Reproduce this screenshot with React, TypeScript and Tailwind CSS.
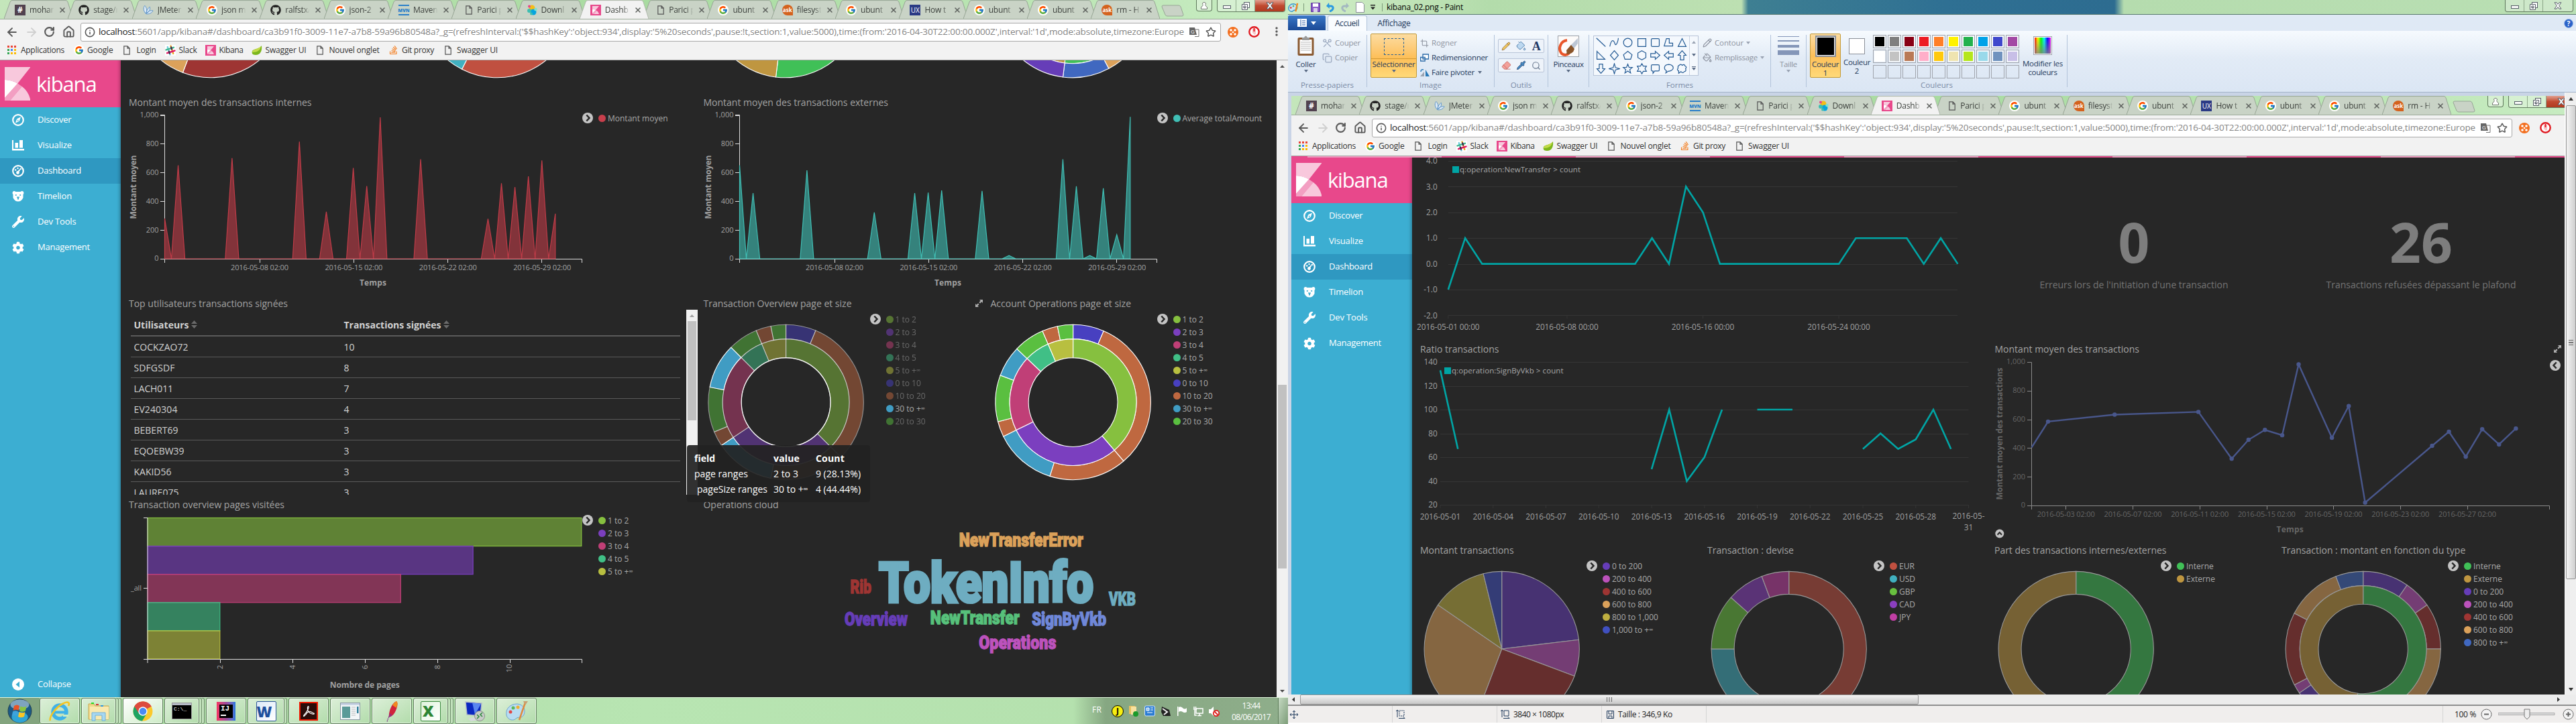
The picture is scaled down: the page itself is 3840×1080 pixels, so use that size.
import React, { useLayoutEffect, useRef, useState } from "react";
import { FcGoogle } from "react-icons/fc";
import { FaGithub, FaWrench, FaCog, FaStackOverflow } from "react-icons/fa";
import { ArrowLeft, ArrowRight, RotateCw, House, Info, Star, X, Scissors, Copy, Crop, Search, Pencil, PaintBucket, Pipette, Eraser } from "lucide-react";

/* Single-line text whose tracking is tuned so that it spans a given width. */
function Fit({ w, className = "", children }: { w: number; className?: string; children: string }) {
  const ref = useRef<HTMLSpanElement>(null);
  const [ls, setLs] = useState(0);
  useLayoutEffect(() => {
    if (ref.current) setLs((w - ref.current.getBoundingClientRect().width) / children.length);
  }, []);
  return (
    <span ref={ref} className={"inline-block whitespace-pre " + className} style={{ letterSpacing: ls + "px" }}>
      {children}
    </span>
  );
}

/* ------------------------------------------------------------------ icons */

const SlackIcon = ({ s = 16 }: { s?: number }) => (
  <svg width={s} height={s} viewBox="0 0 16 16">
    <rect width="16" height="16" fill="#fff" />
    <g strokeWidth="2.4" strokeLinecap="round" transform="rotate(-18 8 8)">
      <path d="M5.5 2v12" stroke="#6ecadc" />
      <path d="M10.5 2v12" stroke="#e9a820" />
      <path d="M2 5.5h12" stroke="#3eb991" />
      <path d="M2 10.5h12" stroke="#e01563" />
      <path d="M5.5 9v3M10.5 4v3" stroke="#472a49" />
    </g>
  </svg>
);

const KibanaMark = ({ w, h }: { w: number; h: number }) => (
  <svg width={w} height={h} viewBox="0 0 38 50" preserveAspectRatio="none">
    <path d="M0 0H38L19 24.500A38 38 0 0 0 0 19Z" fill="#fff" fillOpacity=".7" />
    <path d="M0 19A38 38 0 0 1 19 24.500L0 46Z" fill="#fff" />
    <path d="M19 24.500L0 46V50H8L25.500 29Z" fill="#fff" fillOpacity=".48" />
    <path d="M25.500 29A34 34 0 0 1 38 50H8Z" fill="#fff" fillOpacity=".7" />
  </svg>
);

const KibanaIcon = () => (
  <div className="flex h-4 w-4 items-center justify-center bg-[#e8488b]">
    <KibanaMark w={10} h={12} />
  </div>
);

const PageIcon = ({ className = "" }: { className?: string }) => (
  <svg width="10" height="14" viewBox="0 0 10 14" className={className} fill="none" stroke="#555" strokeWidth="1.2">
    <path d="M.8.8h5.200l3.200 3.200v9.200h-8.400zM6 .8v3.400h3.200" />
  </svg>
);

const AppsIcon = () => (
  <svg width="13" height="13" viewBox="0 0 13 13">
    {["#ea4335", "#ea4335", "#ea4335", "#34a853", "#4285f4", "#fbbc05", "#34a853", "#fbbc05", "#fbbc05"].map((c, i) => (
      <rect key={i} x={(i % 3) * 5} y={Math.floor(i / 3) * 5} width="3" height="3" fill={c} />
    ))}
  </svg>
);

const LeafIcon = () => (
  <svg width="16" height="16" viewBox="0 0 16 16">
    <path d="M15 1C16 9 13 15 6 15 1 15 0 12 1 9 4 5 11 7 15 1Z" fill="#7db71c" />
    <path d="M14 2C13 8 9 11 1 11 1 6 9 7 14 2Z" fill="#c3db4a" />
  </svg>
);

const SlackTab = () => (
  <div className="flex h-4 w-4 items-center justify-center bg-[#51414f] text-[12px] font-bold text-white">#</div>
);
const GoogleIcon = () => (
  <div className="flex h-4 w-4 items-center justify-center rounded-full bg-white">
    <FcGoogle size={14} />
  </div>
);
const JMeterIcon = () => (
  <svg width="17" height="16" viewBox="0 0 17 16" fill="#dbe9f5" stroke="#5a91c8" strokeWidth="1">
    <path d="M4 13C0 8 1 3 3 1 6 4 7 9 5 13ZM5 13C6 8 8 5 11 3 12 7 10 11 6 13ZM5 14C8 10 12 8 16 9 14 13 9 15 5 14Z" />
  </svg>
);
const MavenIcon = () => (
  <div className="flex h-4 w-4 items-center justify-center border-y-2 border-[#2a7fc9] text-[7px] font-black leading-none text-[#2a7fc9]">MVN</div>
);
const ElasticIcon = () => (
  <svg width="16" height="16" viewBox="0 0 16 16">
    <circle cx="8" cy="5" r="4.500" fill="#f4bd19" />
    <circle cx="10" cy="11" r="4.500" fill="#07a5de" />
    <circle cx="4" cy="9" r="3" fill="#3cbeb1" />
    <circle cx="4" cy="2.500" r="2" fill="#e8478b" />
    <circle cx="13.500" cy="7" r="2.300" fill="#7de2d1" />
    <circle cx="7" cy="13.500" r="2" fill="#3ebeb0" />
  </svg>
);
const AskIcon = () => (
  <div className="flex h-4 w-4 items-center justify-center rounded-full rounded-br-none bg-[#d4621e] text-[8px] font-bold leading-none text-white">ask</div>
);
const UxIcon = () => (
  <div className="flex h-4 w-4 items-center justify-center bg-[#2b3a85] text-[10px] leading-none text-white">UX</div>
);

/* ----------------------------------------------------------------- chrome */

const P = () => <PageIcon className="ml-[5px] mr-px" />;
const tabs: [React.ReactNode, string][] = [
  [<SlackTab />, "mohan"], [<FaGithub size={16} color="#222" />, "stage/r"], [<JMeterIcon />, "JMeter"], [<GoogleIcon />, "json m"],
  [<FaGithub size={16} color="#222" />, "ralfstx/"], [<GoogleIcon />, "json-2"], [<MavenIcon />, "Maven"], [<P />, "Parici p"],
  [<ElasticIcon />, "Downl"], [<KibanaIcon />, "Dashb"], [<P />, "Parici p"], [<GoogleIcon />, "ubunt"],
  [<AskIcon />, "filesyst"], [<GoogleIcon />, "ubunt"], [<UxIcon />, "How t"], [<GoogleIcon />, "ubunt"],
  [<GoogleIcon />, "ubunt"], [<AskIcon />, "rm - H"],
];

function Tab({ icon, title, active }: { icon: React.ReactNode; title: string; active: boolean }) {
  return (
    <div className={"-mr-[7.700px] grid h-[28px] w-[103px] shrink-0 " + (active ? "z-10" : "")}>
      <svg width="103" height="28" className="[grid-area:1/1]">
        <path
          d="M0 28 9 3Q10 .6 12 .6H92Q94 .6 95 3L103 28"
          fill={active ? "#f2f2f2" : "#c9d3c6"}
          stroke={active ? "#b0b8ac" : "#97a595"}
        />
      </svg>
      <div className="flex items-center pl-4 pt-[2px] [grid-area:1/1]">
        <div className="flex w-4 shrink-0 justify-center">{icon}</div>
        <div className="ml-[6px] w-[38px] whitespace-pre text-[12px] tracking-[-0.2px] text-[#3c403c] [mask-image:linear-gradient(to_right,black_70%,transparent_96%)]">
          {title}
        </div>
        <X size={12} strokeWidth={3} className="ml-[5px] text-[#5c605c]" />
      </div>
    </div>
  );
}

const MinGlyph = () => (
  <svg width="12" height="6"><rect x=".5" y=".5" width="11" height="4" fill="#fff" stroke="#555b66" /></svg>
);
const MaxGlyph = () => (
  <svg width="12" height="12" fill="#fff" stroke="#555b66"><rect x="3.500" y=".5" width="8" height="8" /><path d="M.5 3.500h8v8h-8zM3 6h3v3H3z" fillRule="evenodd" /></svg>
);
const CloseGlyph = () => (
  <svg width="12" height="11" viewBox="0 0 12 11"><path d="M1 .8h3l2 2.600 2-2.600h3L7.700 5.500l3.300 4.700H8L6 7.600 4 10.200H1l3.300-4.700z" fill="#fff" stroke="#555b66" /></svg>
);

function WindowButtons({ plain = false }: { plain?: boolean }) {
  return (
    <div className="flex h-[18px] w-[102px] overflow-hidden rounded-b-[4px] border border-t-0 border-[#4a5f48]/80">
      <div className="flex w-[28px] items-center justify-center border-r border-[#5f7a5c]/60 bg-white/30 pt-1"><MinGlyph /></div>
      <div className="flex w-[28px] items-center justify-center border-r border-[#5f7a5c]/60 bg-white/30"><MaxGlyph /></div>
      <div className={"flex flex-1 items-center justify-center " + (plain ? "bg-white/30" : "bg-linear-to-b from-[#e0a090] via-[#c04a30] to-[#b03a20]")}><CloseGlyph /></div>
    </div>
  );
}

const bookmarks: [React.ReactNode, number, string, number, number][] = [
  [<AppsIcon />, 20, "Applications", 65, 14], [<GoogleIcon />, 20, "Google", 38.5, 15], [<PageIcon />, 20, "Login", 29, 13],
  [<SlackIcon />, 21, "Slack", 27, 12], [<KibanaIcon />, 21, "Kibana", 36, 12], [<LeafIcon />, 21, "Swagger UI", 61, 15],
  [<PageIcon />, 19, "Nouvel onglet", 75, 13.5], [<FaStackOverflow size={15} color="#f48024" />, 20, "Git proxy", 48, 16],
  [<PageIcon />, 18, "Swagger UI", 61, 0],
];

const urlRest =
  ":5601/app/kibana#/dashboard/ca3b91f0-3009-11e7-a7b8-59a96b80548a?_g=(refreshInterval:('$$hashKey':'object:934',display:'5%20seconds',pause:!t,section:1,value:5000),time:(from:'2016-04-30T22:00:00.000Z',interval:'1d',mode:absolute,timezone:Europe";

function ChromeHeader() {
  return (
    <div className="flex h-[90px] w-[1920px] shrink-0 flex-col text-[12px] text-[#333]">
      <div className="flex h-[28px] bg-linear-to-r from-[#c4e6bb] via-[#a8dba0] to-[#c8ecc2] pl-[6px]">
        {tabs.map(([icon, title], i) => <Tab key={i} icon={icon} title={title} active={i === 9} />)}
        <svg width="36" height="28" className="ml-[9px]"><path d="M3 8H26Q28 8 29 10L33 22Q33 24 31 24H9Q7 24 6 22L1 10Q1 8 3 8Z" fill="#c9d3c6" stroke="#97a595" /></svg>
        <div className="ml-auto mr-[7px] flex h-[17px] w-[24px] items-center justify-center rounded-b-[4px] border border-t-0 border-[#5f7a5c] bg-white/30">
          <svg width="10" height="11" viewBox="0 0 10 11" fill="#fff" stroke="#70786f"><path d="M5 .5a2.200 2.200 0 0 1 1.500 4L9.500 8v2.500h-9V8l3-3.500A2.200 2.200 0 0 1 5 .5z" /></svg>
        </div>
        <div className="mr-1"><WindowButtons /></div>
      </div>
      <div className="flex h-[38px] items-center border-t border-[#9cab99] bg-[#f2f2f2]">
        <ArrowLeft size={20} strokeWidth={2.4} className="ml-2 text-[#5a5a5a]" />
        <ArrowRight size={20} strokeWidth={2.4} className="ml-[9px] text-[#d0d0d0]" />
        <RotateCw size={17} strokeWidth={3} className="ml-[8px] text-[#5a5a5a]" />
        <House size={19} strokeWidth={2.4} className="ml-[11px] text-[#5a5a5a]" />
        <div className="ml-2 flex h-[28px] w-[1700px] items-center rounded-[3px] border border-[#a8a8a8] bg-white pl-[5px]">
          <Info size={16} strokeWidth={2.4} className="text-[#5a5a5a]" />
          <div className="ml-[5px] w-[1619px] whitespace-pre text-[13.500px] text-[#858585]">
            <Fit w={54} className="text-[#222]">localhost</Fit><Fit w={1564}>{urlRest}</Fit>
          </div>
          <svg width="15" height="14" className="ml-[7px]"><path d="M0 0h8l3 11H0z" fill="#666" /><path d="M8 3h6v10.500H8" fill="none" stroke="#777" /><text x="2" y="9" fontSize="8" fill="#fff" fontFamily="Open Sans, sans-serif">G</text></svg>
          <Star size={16} strokeWidth={2.2} className="ml-[9px] text-[#5a5a5a]" />
        </div>
        <svg width="16" height="16" viewBox="0 0 16 16" className="ml-[10px]"><circle cx="8" cy="8" r="8" fill="#f37021" /><g fill="#fff"><circle cx="5" cy="5" r="1.800" /><circle cx="11" cy="5" r="1.800" /><circle cx="5" cy="11" r="1.800" /><circle cx="11" cy="11" r="1.800" /><circle cx="8" cy="8" r="1.300" /></g></svg>
        <svg width="17" height="17" viewBox="0 0 17 17" className="ml-[15px]"><circle cx="8.500" cy="8.500" r="7.200" fill="#fff" stroke="#e01b22" strokeWidth="2.400" /><path d="M6 4h5v8l-2 1-3-3z" fill="#e01b22" fillOpacity=".25" /><path d="M8.500 3v5" stroke="#e01b22" strokeWidth="2" /></svg>
        <svg width="4" height="15" className="ml-[23px]" fill="#5a5a5a"><circle cx="2" cy="2" r="1.700" /><circle cx="2" cy="7" r="1.700" /><circle cx="2" cy="12" r="1.700" /></svg>
      </div>
      <div className="flex h-[24px] items-center border-b border-[#a9a9a9] bg-[#f2f2f2] pb-[6px] pl-[11px]">
        {bookmarks.map(([icon, iw, label, w, gap], i) => (
          <div key={i} className="flex items-center" style={{ marginRight: gap }}>
            <div className="flex shrink-0 items-center" style={{ width: iw }}>{icon}</div>
            <Fit w={w}>{label}</Fit>
          </div>
        ))}
      </div>
    </div>
  );
}

/* ----------------------------------------------------------- kibana shell */

const navItems: [React.ReactNode, string, number][] = [
  [<svg width="18" height="18" viewBox="0 0 18 18"><circle cx="9" cy="9" r="7.800" fill="none" stroke="#fff" strokeWidth="2.200" /><path d="M13 4.500 10.800 10.800 5 13.500 7.200 7.200Z" fill="#fff" /><path d="M8.300 8.300 10 10 8 11Z" fill="#3caed2" /></svg>, "Discover", 50.5],
  [<svg width="18" height="16" fill="#fff"><path d="M0 0h2v13h16v2.500H0zM4.500 4h4.500v7.500h-4.500zM11 0h5v11.500h-5z" /></svg>, "Visualize", 51],
  [<svg width="18" height="18" fill="none" stroke="#fff"><circle cx="9" cy="9" r="7.800" strokeWidth="2.200" /><circle cx="8.500" cy="11.500" r="2.400" fill="#fff" stroke="none" /><path d="M8.500 11L11.500 7" strokeWidth="2" /><g fill="#fff" stroke="none"><circle cx="8.500" cy="5" r="1.200" /><circle cx="5.200" cy="7.500" r="1.300" /><circle cx="12.800" cy="6" r="1.300" /></g></svg>, "Dashboard", 65],
  [<svg width="18" height="16" fill="#fff"><path d="M1 1Q3-1 5.500 1H12.500Q15-1 17 1 18 4 16.500 5V10Q14 15.500 9 15.500T1.500 10V5Q0 4 1 1Z" /><g fill="#3caed2"><circle cx="5.800" cy="6" r="1.100" /><circle cx="12.200" cy="6" r="1.100" /><path d="M6.800 8.500h4.400L10 11v1.500H8V11z" /></g></svg>, "Timelion", 51],
  [<FaWrench size={18} />, "Dev Tools", 57.5],
  [<FaCog size={19} />, "Management", 78],
];

function Sidebar() {
  return (
    <div className="flex h-full w-[180px] shrink-0 flex-col bg-[#3caed2] text-[13px] text-white shadow-[inset_-6px_0_4px_-4px_rgba(0,0,0,0.25)]">
      <div className="flex h-[70px] items-center bg-[#e8488b] pl-[6.500px] shadow-[inset_-6px_0_4px_-4px_rgba(0,0,0,0.25)]">
        <KibanaMark w={38.5} h={50} />
        <Fit w={89.500} className="ml-[9px] text-[31px] font-medium leading-none">kibana</Fit>
      </div>
      {navItems.map(([icon, label, w], i) => (
        <div key={i} className={"flex h-[38px] items-center pl-[18px] " + (i === 2 ? "bg-[#2f98c1] shadow-[inset_-6px_0_4px_-4px_rgba(0,0,0,0.25)]" : "")}>
          <div className="mr-5 flex w-[18px] justify-center">{icon}</div>
          <Fit w={w}>{label}</Fit>
        </div>
      ))}
      <div className="mt-auto flex h-[38px] items-center pl-[18px]">
        <svg width="18" height="18" className="mr-5"><circle cx="9" cy="9" r="9" fill="#fff" /><path d="M11 4.500v9L5.500 9z" fill="#3caed2" /></svg>
        <Fit w={50}>Collapse</Fit>
      </div>
    </div>
  );
}

/* ----------------------------------------------------------------- panels */

const Expand = () => (
  <svg width="13" height="13" viewBox="0 0 13 13" fill="#b0b0b0"><path d="M7 1h5v5l-1.700-1.700-2.300 2.300-1.600-1.600 2.300-2.300zM6 12H1V7l1.700 1.700L5 6.400 6.600 8 4.300 10.300z" /></svg>
);

const Chevron = ({ rot = "", s = 16 }: { rot?: string; s?: number }) => (
  <svg width={s} height={s} viewBox="0 0 16 16" className={"shrink-0 " + rot}><circle cx="8" cy="8" r="8" fill="#c4c4c4" /><path d="M6.300 3.500 10.500 8 6.300 12.500" fill="none" stroke="#272727" strokeWidth="2.500" /></svg>
);

function Panel({ title, tw, className, expand, children }: { title?: string; tw?: number; className: string; expand?: string; children: React.ReactNode }) {
  return (
    <div className={"flex shrink-0 flex-col " + className}>
      {title && (
        <div className="flex h-5 items-center text-[14px] text-[#a3a3a3]">
          <Fit w={tw!}>{title}</Fit>
          {expand && <div className={"ml-auto " + expand}><Expand /></div>}
        </div>
      )}
      <div className="flex h-[280px]">{children}</div>
    </div>
  );
}

/* Open-ended ranges end in a small raised infinity sign. */
const Range = ({ children }: { children: string }) =>
  children.endsWith("∞") ? <span>{children.slice(0, -1)}<span className="relative -top-[2px] text-[0.700em]">∞</span></span> : <span>{children}</span>;

type Item = [string, string, boolean?];
function Legend({ items }: { items: Item[] }) {
  return (
    <div className="flex gap-2 pt-[6px]">
      <Chevron />
      <div className="-mt-px flex flex-col">
        {items.map(([label, color, dim], i) => (
          <div key={i} className={"flex h-[19px] items-center gap-[3px] whitespace-pre text-[12px] text-[#a9a9a9] " + (dim ? "opacity-50" : "")}>
            <div className="h-[11px] w-[11px] rounded-full" style={{ background: color }} />
            {label === "Montant moyen" ? <Fit w={89.500}>{label}</Fit> : <Range>{label}</Range>}
          </div>
        ))}
      </div>
    </div>
  );
}

function T({ x, y, w, s = 11, anchor = "middle", fill = "#a0a0a0", bold, rot, children }: { x: number; y: number; w?: number; s?: number; anchor?: "start" | "middle" | "end"; fill?: string; bold?: boolean; rot?: boolean; children: string }) {
  return (
    <text x={x} y={y} dy=".36em" fontSize={s} fill={fill} textAnchor={anchor} textLength={w} fontWeight={bold ? 700 : 400} transform={rot ? `rotate(-90 ${x} ${y})` : undefined}>
      {children}
    </text>
  );
}

/* Area chart with isolated daily peaks; coordinates are dashboard pixels. */
function SpikeChart({ peaks, color }: { peaks: [number, number][]; color: string }) {
  const x0 = 245.500, y0 = 386, d = 20.08, k = 0.2145;
  let path = `M${x0} ${y0}`;
  peaks.forEach(([day, v]) => {
    const x = x0 + day * d;
    if (day > 0) path += `L${x - d / 2} ${y0}`;
    path += `L${x} ${y0 - v * k}`;
    path += day < 29 ? `L${x + d / 2} ${y0}` : `L${x} ${y0}`;
  });
  return (
    <svg width="676" height="280" viewBox="192 162 676 280" className="shrink-0">
      <path d="M239 171.500H245.500V386.500H867.500V392M239 386.500H245.500V392" fill="none" stroke="#ddd" />
      {[0, 200, 400, 600, 800, 1000].map((v) => (
        <g key={v}>
          <path d={`M239 ${Math.round(386 - v * k) + 0.5}H245`} stroke="#ddd" />
          <T x={236.500} y={385.500 - v * k} anchor="end">{v === 1000 ? "1,000" : String(v)}</T>
        </g>
      ))}
      {["08", "15", "22", "29"].map((v, i) => (
        <g key={v}>
          <path d={`M${387.5 + i * 140} 386V392`} stroke="#ddd" />
          <T x={387 + i * 140.400} y={399} w={86}>{`2016-05-${v} 02:00`}</T>
        </g>
      ))}
      <path d={path + "Z"} fill={color} fillOpacity=".6" stroke={color} strokeWidth="1.200" />
      <T x={556} y={422} w={40} bold s={12}>Temps</T>
      <T x={198.500} y={279} w={95} bold s={12} rot>Montant moyen</T>
    </svg>
  );
}

function arc(cx: number, cy: number, r0: number, r1: number, a0: number, a1: number) {
  const p = (r: number, a: number) => `${cx + r * Math.sin((a * Math.PI) / 180)} ${cy - r * Math.cos((a * Math.PI) / 180)}`;
  const big = a1 - a0 > 180 ? 1 : 0;
  return `M${p(r1, a0)}A${r1} ${r1} 0 ${big} 1 ${p(r1, a1)}L${p(r0, a1)}A${r0} ${r0} 0 ${big} 0 ${p(r0, a0)}Z`;
}

type Slice = [number, string, boolean?];
function Ring({ cx, cy, r0, r1, unit = 1, slices, dim }: { cx: number; cy: number; r0: number; r1: number; unit?: number; slices: Slice[]; dim?: boolean }) {
  let a = 0;
  return (
    <g>
      {slices.map(([n, color, keep], i) => {
        const a0 = a;
        a += n * unit;
        return <path key={i} d={arc(cx, cy, r0, r1, a0, a)} fill={color} stroke="#fff" strokeWidth="1.100" opacity={dim && !keep ? 0.5 : 1} />;
      })}
    </g>
  );
}

const C = { g: "#86c03f", p: "#7b3fbf", k: "#c03f77", t: "#40bf86", y: "#b8bf40", i: "#4840c0", o: "#bf6840", b: "#409cc3", l: "#5abf40" };

const sizeLegend = (dim: boolean): Item[] => [
  ["1 to 2", C.g, dim], ["2 to 3", C.p, dim], ["3 to 4", C.k, dim], ["4 to 5", C.t, dim], ["5 to +∞", C.y, dim],
  ["0 to 10", C.i, dim], ["10 to 20", C.o, dim], ["30 to +∞", C.b], ["20 to 30", C.l, dim],
];

function BarChart() {
  const bars: [number, string][] = [[12, C.g], [9, C.p], [7, C.k], [2, C.t], [2, C.y]];
  return (
    <svg width="676" height="280" viewBox="192 762 676 280" className="shrink-0">
      {bars.map(([n, c], i) => (
        <rect key={i} x="220" y={772.500 + i * 42.100} width={n * 53.900} height="42.100" fill={c} fillOpacity=".6" stroke={c} strokeWidth="1.200" />
      ))}
      <path d="M214 772.500H220V983.500H867.500V989M214 983.500H220V989M214 877.500H220" fill="none" stroke="#ddd" />
      {[2, 4, 6, 8, 10].map((v) => (
        <g key={v}>
          <path d={`M${Math.round(219.800 + v * 53.970) + 0.500} 983V989`} stroke="#ddd" />
          <T x={219.800 + v * 53.970} y={v > 9 ? 997 : 995} rot>{String(v)}</T>
        </g>
      ))}
      <T x={211} y={877} anchor="end" w={16}>_all</T>
      <T x={543.700} y={1021.500} w={104} bold s={12}>Nombre de pages</T>
    </svg>
  );
}

function WordCloud() {
  const words: [string, number, number, number, number, string][] = [
    ["NewTransferError", 1428.400, 815.900, 186.600, 21, "#dba15a"], ["TokenInfo", 1307, 900, 325, 63, "#6eadc1"],
    ["Rib", 1266, 885.800, 33, 21, "#9e3533"], ["VKB", 1652, 903.700, 41.500, 21, "#6eadc1"], ["Overview", 1257.500, 933.600, 95.500, 21, "#663db8"],
    ["NewTransfer", 1385.500, 932, 134.500, 21, "#57c17b"], ["SignByVkb", 1537, 933.600, 112.400, 21, "#6f87d8"], ["Operations", 1458, 968.800, 116.700, 21, "#bc52bc"],
  ];
  return (
    <svg width="855" height="280" viewBox="1048 762 855 280" fontFamily="Roboto, Open Sans, sans-serif">
      {words.map(([t, x, y, w, h, c]) => (
        <text key={t} x={x + h / 28} y={y - h / 36} fontSize={(h * 0.95) / 0.711} textLength={w - h / 14} lengthAdjust="spacingAndGlyphs" fontWeight="900" fill={c} stroke={c} strokeWidth={h / 15}>{t}</text>
      ))}
    </svg>
  );
}

const users: [string, number, number][] = [["COCKZAO72", 10, 81], ["SDFGSDF", 8, 61], ["LACH011", 7, 58.500], ["EV240304", 4, 65], ["BEBERT69", 3, 66], ["EQOEBW39", 3, 75], ["KAKID56", 3, 56], ["LAURE075", 3, 67]];

const Sort = () => (
  <svg width="9" height="12" fill="#6a6a6a" className="ml-[3px]"><path d="M0 5 4.500 0 9 5zM0 7h9l-4.500 5z" /></svg>
);

function UserTable() {
  return (
    <>
      <div className="ml-[2.500px] h-[276px] w-[819.500px] overflow-hidden text-[14px] text-[#d2d2d2]">
        <div className="flex h-[40px] items-center border-b-2 border-[#5a5a5a] pl-[5px] pt-[6px] font-bold">
          <div className="flex w-[313px] items-center"><Fit w={82}>Utilisateurs</Fit><Sort /></div>
          <Fit w={145}>Transactions signées</Fit><Sort />
        </div>
        {users.map(([u, n, w]) => (
          <div key={u} className="flex h-[31px] items-center border-b border-[#5a5a5a] pl-[5px]">
            <div className="w-[313px]"><Fit w={w}>{u}</Fit></div>
            <div>{n}</div>
          </div>
        ))}
      </div>
      <div className="ml-[9px] flex h-[276px] w-[17px] flex-col items-center bg-[#f1f1f1]">
        <svg width="17" height="17"><path d="M5 11h7l-3.500-4z" fill="#a0a0a0" /></svg>
        <div className="h-[148px] w-[13px] bg-[#c1c1c1]" />
      </div>
    </>
  );
}

function Tooltip() {
  return (
    <div className="absolute left-[1024px] top-[574px] grid h-[85px] w-[273px] grid-cols-[118px_63px_1fr] content-start rounded-[4px] bg-[#222]/93 pl-[11px] pt-[8px] text-[14px] leading-[23px] text-white">
      <Fit w={31} className="justify-self-start font-bold">field</Fit><Fit w={39} className="justify-self-start font-bold">value</Fit><Fit w={43} className="justify-self-start font-bold">Count</Fit>
      <div><Fit w={80}>page ranges</Fit></div><div><Fit w={37}>2 to 3</Fit></div><div><Fit w={67}>9 (28.13%)</Fit></div>
      <div className="pl-[4px]"><Fit w={105}>pageSize ranges</Fit></div><div><Range>30 to +∞</Range></div><div><Fit w={67}>4 (44.44%)</Fit></div>
    </div>
  );
}

function LeftDashboard() {
  const donut = (shift: number) => ({ cx: 1170.600 + shift, cy: 600 });
  const a = donut(0), b = donut(428);
  return (
    <div className="flex h-[950px] w-[1723px] flex-col overflow-hidden bg-[#272727] pl-3">
      <div className="flex h-[52px] shrink-0 overflow-hidden">
        <svg width="1711" height="52" viewBox="192 90 1711 52">
          <Ring cx={313.500} cy={0.300} r0={0} r1={115.500} slices={[[200.800, "#9e3533"], [159.200, "#dba15a"]]} />
          <Ring cx={741} cy={0.300} r0={81} r1={115.500} slices={[[207, "#c05040"], [153, "#40b0c0"]]} />
          <Ring cx={1170.600} cy={0.300} r0={81} r1={115.500} slices={[[187, "#40c057"], [173, "#bf9640"]]} />
          <Ring cx={1598.600} cy={0.300} r0={66.500} r1={94.400} slices={[[187, "#40c057"], [173, "#bf9640"]]} />
          <Ring cx={1598.600} cy={0.300} r0={94.400} r1={115.500} slices={[[152, "#dba15a"], [35, "#4068c0"], [60, "#663db8"], [113, "#9e3533"]]} />
        </svg>
      </div>
      <div className="flex h-[300px] shrink-0">
        <Panel title="Montant moyen des transactions internes" tw={272.500} className="w-[856.500px]">
          <SpikeChart color="#c03c48" peaks={[[0, 280], [1, 650], [5, 700], [10, 815], [12, 327], [14, 631], [15, 506], [16, 984], [19, 692], [24, 278], [25, 525], [26, 499], [27, 573], [28, 684], [29, 313]]} />
          <Legend items={[["Montant moyen", "#c83f4c"]]} />
        </Panel>
        <Panel title="Montant moyen des transactions externes" tw={275.500} className="w-[854px]">
          <SpikeChart color="#40bfb5" peaks={[[0, 650], [1, 457], [5, 615], [10, 323], [13, 457], [14, 460], [15, 475], [18, 472], [20, 22], [24, 692], [25, 504], [26, 22], [27, 490], [28, 168], [29, 987]]} />
          <Legend items={[["Average totalAmount", "#40bfb5"]]} />
        </Panel>
      </div>
      <div className="flex h-[300px] shrink-0">
        <Panel title="Top utilisateurs transactions signées" tw={237} className="w-[856.500px]"><UserTable /></Panel>
        <Panel title="Transaction Overview page et size" tw={221} className="w-[428px]" expand="mr-[11px]">
          <svg width="248" height="280" viewBox="1048 462 248 280" className="shrink-0">
            <Ring {...a} r0={94.400} r1={115.700} unit={11.250} dim slices={[[2, C.i], [10, C.o], [5, C.o], [4, C.b, true], [1, C.o], [3, C.l], [3, C.b, true], [2, C.l], [1, C.o], [1, C.l]]} />
            <Ring {...a} r0={66.400} r1={94.400} unit={11.250} dim slices={[[12, C.g], [9, C.p], [7, C.k], [2, C.t], [2, C.y]]} />
            <circle cx="1170.600" cy="600" r="66.400" fill="none" stroke="#fff" strokeWidth="1.200" />
          </svg>
          <Legend items={sizeLegend(true)} />
        </Panel>
        <Panel title="Account Operations page et size" tw={209.500} className="w-[426px]">
          <svg width="248" height="280" viewBox="1476 462 248 280" className="shrink-0">
            <Ring {...b} r0={94.400} r1={115.700} unit={360 / 31} slices={[[2, C.i], [10, C.o], [5, C.o], [4, C.b], [1, C.o], [3, C.l], [2, C.b], [2, C.l], [1, C.o], [1, C.l]]} />
            <Ring {...b} r0={66.400} r1={94.400} unit={360 / 31} slices={[[12, C.g], [9, C.p], [6, C.k], [2, C.t], [2, C.y]]} />
          </svg>
          <Legend items={sizeLegend(false)} />
        </Panel>
      </div>
      <div className="flex h-[298px] shrink-0">
        <Panel title="Transaction overview pages visitées" tw={232} className="w-[856.500px]">
          <BarChart />
          <Legend items={sizeLegend(false).slice(0, 5)} />
        </Panel>
        <Panel title="Operations cloud" tw={112} className="w-[854px]"><WordCloud /></Panel>
      </div>
    </div>
  );
}

/* Timeseries without markers, drawn over faint grid lines. */
function Timelion({ x0, x1, y0, y1, d, k, base, runs, yl, xl, label, lx, ly, lw, vb, sz }: { x0: number; x1: number; y0: number; y1: number; d: number; k: number; base: number; runs: [number, number][][]; yl: string[]; xl: [number, string][]; label: string; lx: number; ly: number; lw: number; vb: string; sz: [number, number] }) {
  const step = (y1 - y0) / (yl.length - 1);
  return (
    <svg width={sz[0]} height={sz[1]} viewBox={vb} className="shrink-0 overflow-visible">
      {yl.map((t, i) => (
        <g key={t}>
          <path d={`M${x0} ${Math.round(y0 + i * step) + 0.500}H${x1}`} stroke="#353535" />
          <T x={2142.700} y={y0 + i * step} anchor="end" s={11.800}>{t}</T>
        </g>
      ))}
      {xl.map(([x, t]) => (
        <g key={x}>
          <path d={`M${x} ${y1}v5`} stroke="#353535" />
          {x > 2930
            ? <><T x={x} y={y1 + 17} s={11.800}>2016-05-</T><T x={x} y={y1 + 33.500} s={11.800}>31</T></>
            : <T x={x} y={y1 + 17.300} s={11.800} w={t.length > 10 ? 93.500 : 60.500}>{t}</T>}
        </g>
      ))}
      {runs.map((r, i) => (
        <polyline key={i} points={r.map(([a, v]) => `${x0 + a * d},${y1 - (v - base) * k}`).join(" ")} fill="none" stroke="#00a5a5" strokeWidth="2.600" />
      ))}
      <rect x={lx} y={ly} width="10" height="10" fill="#00a5a5" />
      <T x={lx + 11} y={ly + 5} anchor="start" s={11.500} w={lw} fill="#a8a8a8">{label}</T>
    </svg>
  );
}

function Metric({ value, caption, w }: { value: string; caption: string; w: number }) {
  return (
    <div className="flex w-[428px] flex-col items-center">
      <div className="mt-[84px] text-[82px] font-bold leading-[86px] text-[#7d7d7d]">{value}</div>
      <div className="mt-[12px] text-[14px] leading-[20px] text-[#747474]"><Fit w={w}>{caption}</Fit></div>
    </div>
  );
}

function AverageLine() {
  const pts: [number, number][] = [[241, 370], [281, 258], [443, 228], [647, 216], [728, 419], [769, 337], [809, 294], [851, 317], [891, 10], [972, 328], [1013, 191], [1053, 609], [1216, 363], [1257, 302], [1298, 410], [1338, 291], [1379, 357], [1420, 288]].map(([x, y]) => [2880 + x * 0.61224, 540 + y * 0.34439]);
  const f = "#666";
  return (
    <svg width="827" height="280" viewBox="2973 530 827 280" className="shrink-0">
      <path d="M3021 540.500H3027.500V754.500H3799.500V760M3021 754.500H3027.500V760" fill="none" stroke="#8a8a8a" />
      {[0, 200, 400, 600, 800, 1000].map((v) => (
        <g key={v}>
          <path d={`M3021 ${Math.round(754 - v * 0.214) + 0.500}H3027`} stroke="#8a8a8a" />
          <T x={3018} y={753.500 - v * 0.214} anchor="end" fill={f}>{v === 1000 ? "1,000" : String(v)}</T>
        </g>
      ))}
      {["03", "07", "11", "15", "19", "23", "27"].map((v, i) => (
        <g key={v}>
          <path d={`M${Math.round(3078.400 + i * 99.700) + 0.500} 754V760`} stroke="#8a8a8a" />
          <T x={3078.800 + i * 99.700} y={767.300} w={86} fill={f}>{`2016-05-${v} 02:00`}</T>
        </g>
      ))}
      <polyline points={pts.map((p) => p.join(",")).join(" ")} fill="none" stroke="#49578c" strokeWidth="2.400" />
      {pts.slice(1).map(([x, y]) => <circle key={x} cx={x} cy={y} r="3.200" fill="#49578c" />)}
      <T x={3412.600} y={790} w={40} bold s={12} fill={f}>Temps</T>
      <T x={2979.800} y={647} w={197} bold s={12} rot fill={f}>Montant moyen des transactions</T>
      <g transform="translate(2979.800 796)"><circle r="6.500" fill="#c4c4c4" /><path d="M-3.200 1.700 0-1.700 3.200 1.700" fill="none" stroke="#272727" strokeWidth="2" /></g>
    </svg>
  );
}

function PiePanel({ title, tw, ox, rings, legend }: { title: string; tw: number; ox: number; rings: [number, number, Slice[]][]; legend: Item[] }) {
  return (
    <Panel title={title} tw={tw} className="w-[428px]">
      <svg width="248" height="280" viewBox={`${ox} 830 248 280`} className="shrink-0">
        <g opacity=".52">
          {rings.map(([r0, r1, slices], i) => <Ring key={i} cx={ox + 121.700} cy={968} r0={r0} r1={r1} slices={slices} />)}
        </g>
      </svg>
      <Legend items={legend} />
    </Panel>
  );
}

function RightDashboard() {
  const amt: Item[] = [["0 to 200", "#663db8"], ["200 to 400", "#bc52bc"], ["400 to 600", "#9e3533"], ["600 to 800", "#dba15a"]];
  const days = ["01", "04", "07", "10", "13", "16", "19", "22", "25", "28", "31"];
  return (
    <div className="flex h-[950px] w-[1723px] flex-col overflow-hidden bg-[#272727] pl-3">
      <div className="flex h-[277px] shrink-0">
        <div className="w-[850px]">
          <Timelion x0={2158.800} x1={2918} y0={240} y1={470.400} d={25.320} k={38.400} base={-2} vb="2117 233 850 277" sz={[850, 277]}
            yl={["4.0", "3.0", "2.0", "1.0", "0.0", "-1.0", "-2.0"]}
            xl={[[2158.800, "2016-05-01 00:00"], [2336, "2016-05-08 00:00"], [2538.500, "2016-05-16 00:00"], [2741, "2016-05-24 00:00"]]}
            label="q:operation:NewTransfer > count" lx={2165} ly={248} lw={180}
            runs={[[[0, -1], [1, 1], [2, 0], [11, 0], [12, 1], [13, 0], [14, 3], [15, 2], [16, 0], [23, 0], [24, 1], [27, 1], [28, 0], [29, 1], [30, 0]]]} />
        </div>
        <Metric value="0" caption="Erreurs lors de l'initiation d'une transaction" w={281} />
        <Metric value="26" caption="Transactions refusées dépassant le plafond" w={283} />
      </div>
      <div className="flex h-[300px] shrink-0">
        <Panel title="Ratio transactions" tw={117.500} className="w-[856.500px]">
          <Timelion x0={2147} x1={2934.500} y0={540} y1={753.200} d={26.250} k={1.777} base={20} vb="2117 530 856 280" sz={[856, 280]}
            yl={["140", "120", "100", "80", "60", "40", "20"]}
            xl={days.map((t, i) => [2147 + i * 78.750, "2016-05-" + t] as [number, string])}
            label="q:operation:SignByVkb > count" lx={2153} ly={548} lw={166.500}
            runs={[[[0, 133], [1, 67]], [[12, 50], [13, 100], [14, 40], [15, 60], [16, 100]], [[18, 100], [20, 100]], [[24, 67], [25, 80], [26, 67], [27, 75], [28, 100], [29, 67]]]} />
        </Panel>
        <Panel title="Montant moyen des transactions" tw={215.500} className="w-[846px]" expand="mr-px">
          <AverageLine />
          <div className="pt-[7px]"><Chevron rot="rotate-180" /></div>
        </Panel>
      </div>
      <div className="flex shrink-0">
        <PiePanel title="Montant transactions" tw={139.600} ox={2116.700}
          rings={[[0, 115.600, [[83.200, "#663db8"], [27.300, "#bc52bc"], [90.300, "#9e3533"], [103.800, "#dba15a"], [41.600, "#bfaf40"], [13.800, "#4050bf"]]]]}
          legend={[...amt, ["800 to 1,000", "#bfaf40"], ["1,000 to +∞", "#4050bf"]]} />
        <PiePanel title="Transaction : devise" tw={129} ox={2544.600}
          rings={[[81.600, 115.600, [[207.700, "#c05040"], [62.300, "#40b0c0"], [41.600, "#68c03f"], [27.900, "#8a3fbf"], [20.500, "#c03fa5"]]]]}
          legend={[["EUR", "#c05040"], ["USD", "#40b0c0"], ["GBP", "#68c03f"], ["CAD", "#8a3fbf"], ["JPY", "#c03fa5"]]} />
        <PiePanel title="Part des transactions internes/externes" tw={256.500} ox={2973.700}
          rings={[[81.600, 115.600, [[187, "#40c057"], [173, "#bf9640"]]]]}
          legend={[["Interne", "#40c057"], ["Externe", "#bf9640"]]} />
        <PiePanel title="Transaction : montant en fonction du type" tw={274.300} ox={3401.700}
          rings={[
            [94.400, 115.600, [[34.500, "#663db8"], [21, "#bc52bc"], [34.500, "#9e3533"], [62, "#dba15a"], [35, "#4068c0"], [48.400, "#663db8"], [7, "#bc52bc"], [55, "#9e3533"], [42, "#dba15a"], [20.600, "#4068c0"]]],
            [66.700, 94.400, [[187, "#40c057"], [173, "#bf9640"]]],
          ]}
          legend={[["Interne", "#40c057"], ["Externe", "#bf9640"], ...amt, ["800 to +∞", "#4068c0"]]} />
      </div>
    </div>
  );
}

/* ---------------------------------------------------------------- taskbar */

const TaskIcons = {
  ie: <svg width="34" height="34" viewBox="0 0 34 34"><circle cx="17" cy="18" r="10" fill="none" stroke="#3fb2e8" strokeWidth="5.500" /><path d="M10 18.500h17" stroke="#3fb2e8" strokeWidth="4" /><path d="M22 22h8v3h-8z" fill="#c9ecc4" /><path d="M3 31C1 26 10 12 21 6 28 2 33 3 30 9" fill="none" stroke="#f5c421" strokeWidth="2.600" /></svg>,
  folder: <svg width="34" height="32" viewBox="0 0 34 32"><path d="M2 5h8l2 3h20v20H2z" fill="#f0d888" stroke="#c9a750" /><path d="M4 9h28v19H4z" fill="#f9e9ae" /><path d="M7 18h20v12h-5v-8h-10v8H7z" fill="#a8d8f0" stroke="#6fb0d8" /><path d="M6 3h4v2H6z" fill="#2d2" /><path d="M13 5h4v2h-4z" fill="#d33" /><path d="M20 7h4v2h-4z" fill="#39d" /></svg>,
  chrome: <svg width="30" height="30" viewBox="0 0 30 30"><circle cx="15" cy="15" r="14.500" fill="#fbc92c" /><path d="M15 15 2.400 7.800A14.500 14.500 0 0 1 27.600 7.800Z" fill="#dd4b3e" /><path d="M15 15 2.400 7.800A14.500 14.500 0 0 0 14 29.500L21 18Z" fill="#1da462" /><path d="M15 8H27.600A14.500 14.500 0 0 0 15 .5 14.500 14.500 0 0 0 2.400 7.700L9 18Z" fill="#dd4b3e" /><circle cx="15" cy="15" r="6.700" fill="#fff" /><circle cx="15" cy="15" r="5.300" fill="#4a8af4" /></svg>,
  cmd: <div className="flex h-[25px] w-[30px] flex-col border border-[#999] bg-black"><div className="h-[3px] bg-[#b5bac5]" /><div className="pl-[2px] font-['Liberation_Mono'] text-[8px] leading-[11px] text-white">C:\_</div></div>,
  ij: <div className="flex h-[28px] w-[28px] items-center justify-center bg-linear-to-r from-[#f5315f] via-[#a04a9c] to-[#1676e0]"><div className="flex h-5 w-5 flex-col bg-black pl-[2px] pt-px font-['Liberation_Mono'] text-[11px] font-bold leading-[11px] text-white">IJ<span className="mt-[3px] h-[2px] w-2 bg-white" /></div></div>,
  word: <div className="flex h-[30px] w-[30px] items-center rounded-[2px] border border-[#2a5699] bg-linear-to-br from-[#dce9f8] to-white text-[22px] font-black leading-none text-[#1d4f9c]">W</div>,
  pdf: <div className="flex h-[28px] w-[28px] items-center justify-center border-2 border-[#f01800] bg-[#2a0d0a]"><svg width="20" height="20" viewBox="0 0 20 20" fill="none" stroke="#fff" strokeWidth="1.200"><path d="M9 3C12 1 9 10 3 16 1 19 5 17 8 12 12 8 14 12 18 13 20 15 12 15 9 9 8 5 8 4 9 3Z" /></svg></div>,
  win: <svg width="30" height="26" viewBox="0 0 30 26"><rect x=".5" y=".5" width="29" height="25" fill="#f3f6f8" stroke="#8a97a5" /><path d="M1 1h28v3H1z" fill="#c8d4e4" /><path d="M3 6h12v17H3z" fill="#5a9a98" /><path d="M17 7h6M17 10h6M17 13h6M17 16h6M17 19h6" stroke="#bbb" /><path d="M25 6h2.500v10H25z" fill="#2d7f9a" /></svg>,
  feather: <svg width="34" height="34" viewBox="0 0 34 34"><path d="M24 2C27 5 25 12 22 18 20 22 17 25 13 25 12 20 15 12 18 7Q21 3 24 2Z" fill="#d0243d" /><path d="M24 2C27 5 25 8 24 12L18 8Q21 3 24 2Z" fill="#f08a20" /><path d="M14 20 18 23Q15 26 12 26Z" fill="#9a2a76" /><path d="M13 25 11 29 10 33" fill="none" stroke="#7a2a86" strokeWidth="1.200" strokeDasharray="2 1" /></svg>,
  excel: <div className="flex h-[30px] w-[30px] items-center rounded-[2px] border border-[#3a8a3e] bg-linear-to-br from-[#dff3dc] to-white pl-[2px] text-[23px] font-black leading-none text-[#2c8433]">X</div>,
  rdp: <svg width="32" height="32" viewBox="0 0 32 32"><path d="M2 2 26 4 24 23 4 21Z" fill="#0a28c0" stroke="#b5bcc8" strokeWidth="1.500" /><path d="M12 3 25 5 16 21Z" fill="#5a86f0" /><path d="M6 27 18 24 22 29 10 31Z" fill="#d5d8dc" /><circle cx="23" cy="23" r="7.500" fill="#c8ccc8" stroke="#8a8f8a" /><path d="m19 21 3 3-3 3M27 18l-3 3 3 3" fill="none" stroke="#2a8a3a" strokeWidth="1.500" /></svg>,
  paint: <svg width="34" height="32" viewBox="0 0 34 32"><path d="M2 22C0 12 8 5 18 5 28 6 31 14 28 21 24 28 20 23 16 27 12 31 4 29 2 22Z" fill="#b8dcf2" stroke="#6fa5cc" /><circle cx="8" cy="17" r="2.500" fill="#e04848" /><circle cx="12" cy="11" r="2.500" fill="#5cb85c" /><circle cx="19" cy="10" r="2.500" fill="#f0b030" /><path d="M30 3 21 29" stroke="#e08a3c" strokeWidth="2.500" /><path d="M27 1h7l-4 6z" fill="#c9a070" /></svg>,
};

function TaskButton({ icon, w, stack = 0, lit }: { icon: React.ReactNode; w: string; stack?: number; lit?: boolean }) {
  return (
    <div className="flex h-[39px]">
      <div className={`flex items-center justify-center rounded-[3px] border border-[#5f7d5b] shadow-[inset_0_0_0_1px_rgba(255,255,255,0.6)] ${w} ${lit ? "bg-linear-to-br from-white to-[#cdebc6]" : "bg-linear-to-br from-[#dcefd8] to-[#b2dcab]"}`}>{icon}</div>
      {Array.from({ length: stack }, (_, i) => <div key={i} className="w-[4px] rounded-r-[3px] border-y border-r border-[#6f8d6b] bg-[#c2e2bc]" />)}
    </div>
  );
}

function Taskbar() {
  return (
    <div className="flex h-[40px] w-[1920px] shrink-0 items-start border-t border-[#dff5da] bg-linear-to-r from-[#a9d8a2] via-[#b8e5b2] to-[#b3dfac]">
      <div className="flex h-full w-[59px] items-center justify-center bg-[#83a47e]">
        <svg width="37" height="37" viewBox="0 0 37 37">
          <circle cx="18.500" cy="18.500" r="17.500" fill="#1b5a86" stroke="#223f50" />
          <ellipse cx="18.500" cy="28" rx="12" ry="8" fill="#35b8ea" opacity=".8" />
          <ellipse cx="18.500" cy="9" rx="14" ry="7.500" fill="#cfe2ee" opacity=".55" />
          <path d="M10 11Q14 8 18 11L16.500 18Q13 15.500 8.500 18Z" fill="#ea5426" /><path d="M19.500 11.500Q24 14 28.500 11.500L27 18.500Q22 21 18 18.500Z" fill="#8ac440" />
          <path d="M8 19.500Q12 17 16 19.500L14.500 26.500Q11 24 6.500 26.500Z" fill="#3ea3dc" /><path d="M17.500 20Q22 22.500 26.500 20L25 27Q20 29.500 16 27Z" fill="#fbc525" />
        </svg>
      </div>
      <div className="flex">
        <div className="mr-[2px]"><TaskButton icon={TaskIcons.ie} w="w-[60px]" /></div>
        <div className="mr-[2px]"><TaskButton icon={TaskIcons.folder} w="w-[52px]" stack={2} /></div>
        <div className="mr-[2px]"><TaskButton icon={TaskIcons.chrome} w="w-[60px]" lit /></div>
        <div className="mr-[2px]"><TaskButton icon={TaskIcons.cmd} w="w-[52px]" stack={2} /></div>
        <div className="mr-[2px]"><TaskButton icon={TaskIcons.ij} w="w-[60px]" /></div>
        <div className="mr-[2px]"><TaskButton icon={TaskIcons.word} w="w-[55px]" stack={1} /></div>
        <div className="mr-[2px]"><TaskButton icon={TaskIcons.pdf} w="w-[60px]" /></div>
        <div className="mr-[2px]"><TaskButton icon={TaskIcons.win} w="w-[60px]" /></div>
        <div className="mr-[2px]"><TaskButton icon={TaskIcons.feather} w="w-[60px]" /></div>
        <div className="mr-[2px]"><TaskButton icon={TaskIcons.excel} w="w-[52px]" stack={2} /></div>
        <div className="mr-[2px]"><TaskButton icon={TaskIcons.rdp} w="w-[60px]" /></div>
        <TaskButton icon={TaskIcons.paint} w="w-[60px]" />
      </div>
      <div className="ml-auto flex h-full w-[320px] items-center bg-linear-to-r from-transparent via-[#86a782] via-15% to-[#8fae8b] text-[12px] text-white">
        <Fit w={14} className="-mt-1 ml-[28px]">FR</Fit>
        <div className="ml-[15px] flex h-[18px] w-[18px] items-center justify-center rounded-full border border-black bg-[#f7ef10] text-[12px] font-bold text-black">J</div>
        <svg width="16" height="18" className="ml-[7px]"><path d="M1 1h9v12H1z" fill="#e8c060" /><path d="M4 2h8v12H4z" fill="#f6e1a0" /><circle cx="11" cy="13" r="4" fill="#1a9a2a" /></svg>
        <svg width="16" height="18" className="ml-[8px]"><rect x=".5" y="1" width="15" height="15" rx="2" fill="#2b7cd3" stroke="#cfe4f8" /><path d="M3 4h4v4H3zM9 4h4M9 7h4M4 11h8" stroke="#fff" fill="#8ec0f0" /></svg>
        <svg width="16" height="16" className="ml-[8px]"><path d="M2 1 13 6 15 15 4 15 1 9Z" fill="#222" /><path d="M3 4 10 9 5 13" fill="none" stroke="#eee" strokeWidth="2" /></svg>
        <svg width="16" height="16" className="ml-[8px]" fill="#fff"><path d="M1 1h1.500v14H1zM3 2Q6 0 9 3T15 3V9Q12 11 9 9T3 9Z" /></svg>
        <svg width="16" height="16" className="ml-[8px]" fill="none" stroke="#fff" strokeWidth="1.500"><path d="M5 4h10v7H5zM7 14.500h6M10 11v3M2 1v4M4.500 1v4M1 5h5M3 6v8h3" /></svg>
        <svg width="18" height="16" className="ml-[7px]"><path d="M1 5h3l4-4v14l-4-4H1z" fill="#fff" /><circle cx="12" cy="11" r="4.200" fill="#fff" stroke="#e02020" strokeWidth="1.800" /><path d="m9 8 6 6" stroke="#e02020" strokeWidth="1.800" /></svg>
        <div className="ml-[17px] flex flex-col items-center text-[12px] leading-[17px]">
          <Fit w={27}>13:44</Fit><Fit w={58}>08/06/2017</Fit>
        </div>
        <div className="ml-auto h-full w-[15px] border-l border-[#5f7d5b] bg-linear-to-br from-[#c5d9c2] to-[#7d9d79]" />
      </div>
    </div>
  );
}

/* ------------------------------------------------------------------ paint */

const Caret = ({ dim = false }: { dim?: boolean }) => <svg width="6" height="4"><path d="M0 0h6L3 4z" fill={dim ? "#9aa3b3" : "#5a6b85"} /></svg>;

function Group({ w, label, children }: { w: string; label?: string; children: React.ReactNode }) {
  return (
    <div className={"mt-[6px] flex h-[78px] shrink-0 flex-col border-r border-[#b3c4db] " + w}>
      <div className="flex h-[67px] shrink-0">{children}</div>
      <div className="self-center text-[11.500px] leading-[16px] text-[#7b8ba5]">{label}</div>
    </div>
  );
}

const shapes = ["M2 2 18 17", "M2 17C5 2 9 6 11 12S17 6 17 2", "M10 2.500a7.500 7.500 0 1 1 0 15 7.500 7.500 0 1 1 0-15", "M3 3h14v14H3z", "M5 3h10q2 0 2 2v10q0 2-2 2H5q-2 0-2-2V5q0-2 2-2z", "M2 16 6 3h5v8h6v5z", "M10 3 17 17H3z",
  "M3 3 17 17H3z", "M10 2 17 10 10 18 3 10z", "M10 3 17.500 9 15 17H5L2.500 9z", "M10 2 17 6v8l-7 4-7-4V6z", "M2 7h8V3l8 7-8 7v-4H2z", "M18 7h-8V3l-8 7 8 7v-4h8z", "M7 18v-8H3l7-8 7 8h-4v8z",
  "M7 2v8H3l7 8 7-8h-4V2z", "M10 1 12 8 19 10 12 12 10 19 8 12 1 10 8 8z", "M10 2l2.200 5.500 5.800.3-4.500 3.700 1.500 6-5-3.300-5 3.300 1.500-6L2 7.800l5.800-.3z", "M10 1l2.500 4.500H18L15.500 10 18 14.500h-5.500L10 19l-2.500-4.500H2L4.500 10 2 5.500h5.500z", "M5 3h10q2 0 2 2v7q0 2-2 2H9l-3 4v-4H5q-2 0-2-2V5q0-2 2-2z", "M10 2.500c5 0 8 3 8 6s-4 6-9 6l-4 3 1-4C1 11 1 3 10 2.500z", "M5 4q3-3 5 0 4-3 5 1 4 2 1 5 2 4-2 5-3 4-6 0l-4 3V14Q0 12 3 9 2 5 5 4z"];

const swatches = ["#000", "#7f7f7f", "#880015", "#ed1c24", "#ff7f27", "#fff200", "#22b14c", "#00a2e8", "#3f48cc", "#a349a4", "#fff", "#c3c3c3", "#b97a57", "#ffaec9", "#ffc90e", "#efe4b0", "#b5e61d", "#99d9ea", "#7092be", "#c8bfe7"];

function Ribbon() {
  const ink = "text-[#1e395b]", dim = "text-[#8d93a0]";
  return (
    <div className="flex h-[92px] w-full shrink-0 border-b border-[#a3b4c9] bg-linear-to-b from-[#f6fafe] via-[#e2ebf6] via-45% to-[#dbe6f4] text-[11.500px]">
      <Group w="w-[118px]" label="Presse-papiers">
        <div className="flex w-[51px] flex-col items-center pl-[2px] pt-px">
          <svg width="25" height="31" viewBox="0 0 25 31"><rect x=".5" y="3" width="24" height="27" rx="2" fill="#8a5a32" /><path d="M3.500 6h18v21h-18z" fill="#fff" /><path d="M5 10h15M5 13h15M5 16h15M5 19h15M5 22h15" stroke="#b5b5b5" /><path d="M7 3h3q2.500-5 5 0h3v4H7z" fill="#9a9a9a" /></svg>
          <Fit w={30} className={"mt-[3px] leading-[17px] " + ink}>Coller</Fit>
          <Caret />
        </div>
        <div className={"flex flex-col pt-px " + dim}>
          <div className="flex h-[22px] items-center"><Scissors size={15} className="mr-[4px] rotate-90 text-[#9aa8bf]" /><Fit w={38}>Couper</Fit></div>
          <div className="flex h-[22px] items-center"><Copy size={15} className="mr-[4px] text-[#9aa8bf]" /><Fit w={34}>Copier</Fit></div>
        </div>
      </Group>
      <Group w="w-[190px]" label="Image">
        <div className="-mt-[2px] ml-[5px] flex h-[66px] w-[69px] flex-col items-center rounded-[2px] border border-[#c29a3a] bg-linear-to-b from-[#fcdca0] via-[#fdbf58] via-55% to-[#ffd978]">
          <div className="mt-[6px] h-[25px] w-[30px] border border-dashed border-[#1f5f9a]" />
          <div className="mt-[5px] flex w-full flex-col items-center border-t border-[#d39a35] leading-[16px] text-[#1e395b]"><Fit w={64}>Sélectionner</Fit><Caret /></div>
        </div>
        <div className={"ml-[5px] flex flex-col pt-px " + ink}>
          <div className={"flex h-[22px] items-center " + dim}><Crop size={13} className="mr-[4px]" /><Fit w={38}>Rogner</Fit></div>
          <div className="flex h-[22px] items-center"><svg width="13" height="12" className="mr-[4px]" fill="#fff" stroke="#2a6aa8" strokeWidth="1.300"><path d="M4 1h8.500v7H4zM.7 5.500h6.500v5.500H.7z" /></svg><Fit w={84}>Redimensionner</Fit></div>
          <div className="flex h-[22px] items-center"><svg width="15" height="13" className="mr-[2px]"><path d="M0 12 6 5v7z" fill="#9aa3b0" /><path d="M8 2v10h6z" fill="#2a7ab8" /><path d="M1 5Q1 1 5 2" fill="none" stroke="#2a7ab8" strokeWidth="1.500" /></svg><Fit w={64}>Faire pivoter</Fit><span className="ml-[5px] flex"><Caret /></span></div>
        </div>
      </Group>
      <Group w="w-[80px]" label="Outils">
        <div className="flex flex-col gap-[8px] pl-[5px] pt-[6px]">
          <div className="flex h-[21px] w-[69px] items-center justify-around rounded-[2px] border border-[#b8c4d8] bg-[#eef3fa]"><Pencil size={14} fill="#f0c860" color="#8a6030" strokeWidth={1.3} /><PaintBucket size={15} fill="#bcd8f0" color="#4a7aa8" strokeWidth={1.500} /><span className="font-['Liberation_Serif'] text-[18px] font-bold leading-none text-[#1f3864]">A</span></div>
          <div className="flex h-[21px] w-[69px] items-center justify-around rounded-[2px] border border-[#b8c4d8] bg-[#eef3fa]"><Eraser size={15} fill="#f3a09a" color="#c0605a" strokeWidth={1.300} /><Pipette size={15} fill="#4a90c8" color="#2a4a78" strokeWidth={1.500} /><Search size={14} className="text-[#6a7a90]" /></div>
        </div>
      </Group>
      <Group w="w-[61px]">
        <div className="flex w-full flex-col items-center pt-px">
          <svg width="32" height="32" viewBox="0 0 32 32"><rect x=".5" y=".5" width="31" height="31" fill="#fdfbfa" stroke="#9aa0a8" /><path d="M14 7C4 8 0 20 6 27 12 31 18 28 18 22" fill="none" stroke="#e8552a" strokeWidth="4" /><path d="M18 16 30 4v8l-7 9z" fill="#bcc6d4" /><path d="M13 22 20 14l5 6q-2 8-12 8 1-3 0-6z" fill="#8a5428" /></svg>
          <Fit w={45} className={"mt-[2px] leading-[17px] " + ink}>Pinceaux</Fit><Caret />
        </div>
      </Group>
      <Group w="w-[271px]" label="Formes">
        <div className="ml-[6px] mt-px flex h-[60px] w-[157px] border border-[#b8c4d8] bg-[#f4f8fd]">
          <div className="grid w-[143px] grid-cols-7 place-items-center">
            {shapes.map((d, i) => <svg key={i} width="17" height="17" viewBox="0 0 20 20" fill="none" stroke="#235a94" strokeWidth="1.400"><path d={d} /></svg>)}
          </div>
          <div className="flex w-[13px] flex-col items-center justify-around border-l border-[#c8d2e2]"><div className="rotate-180"><Caret dim /></div><Caret /><div className="border-t border-[#5a6b85] pt-px"><Caret /></div></div>
        </div>
        <div className={"ml-[6px] flex flex-col pt-px " + dim}>
          <div className="flex h-[22px] items-center"><Pencil size={14} className="mr-[4px]" /><Fit w={43}>Contour</Fit><span className="ml-1 flex"><Caret dim /></span></div>
          <div className="flex h-[22px] items-center"><PaintBucket size={14} className="mr-[4px]" /><Fit w={64}>Remplissage</Fit><span className="ml-1 flex"><Caret dim /></span></div>
        </div>
      </Group>
      <Group w="w-[53px]">
        <div className={"flex w-full flex-col items-center " + dim}>
          <div className="mt-[2px] h-px w-[32px] bg-[#8496b8]" /><div className="mt-[5px] h-[2px] w-[32px] bg-[#8496b8]" />
          <div className="mt-[5px] h-[4px] w-[32px] bg-[#8496b8]" /><div className="mt-[4px] h-[7px] w-[32px] bg-[#8496b8]" />
          <Fit w={26} className="mt-[6px] leading-[16px]">Taille</Fit><Caret dim />
        </div>
      </Group>
      <Group w="w-[389px]" label="Couleurs">
        <div className="-mt-[2px] ml-[5px] flex h-[66px] w-[46px] flex-col items-center rounded-[2px] border border-[#c29a3a] bg-linear-to-b from-[#fcdca0] via-[#fdbf58] to-[#ffd978] leading-[13px] text-[#1e395b]">
          <div className="mb-[4px] mt-[2px] h-[32px] w-[31px] border-2 border-[#8a8f98] bg-black outline-1 -outline-offset-3 outline-white" /><Fit w={40}>Couleur</Fit><span>1</span>
        </div>
        <div className="ml-[2px] flex w-[44px] flex-col items-center pt-[5px] leading-[13px] text-[#1e395b]"><div className="mb-[5px] h-[24px] w-[24px] border border-[#8a8f98] bg-white" /><Fit w={40}>Couleur</Fit><span>2</span></div>
        <div className="ml-[2px] grid h-[65px] w-[220px] grid-cols-10 gap-y-[2px]">
          {Array.from({ length: 30 }, (_, i) => <div key={i} className="h-5 w-5 border border-[#a0a4ac] p-px"><div className={"h-full w-full " + (i < 20 ? "border border-white" : "")} style={{ background: swatches[i] }} /></div>)}
        </div>
        <div className="ml-[1px] flex w-[64px] flex-col items-center pt-[2px] leading-[13px] text-[#1e395b]">
          <div className="mb-[6px] h-[28px] w-[28px] border border-[#a0a4ac] bg-white p-px"><div className="h-full w-full bg-[linear-gradient(to_right,#f00,#ff0,#0f0,#0ff,#00f,#f0f)]"><div className="h-full w-full bg-linear-to-b from-transparent to-[#808080]/80" /></div></div>
          <Fit w={60}>Modifier les</Fit><Fit w={43}>couleurs</Fit>
        </div>
      </Group>
    </div>
  );
}

function PaintWindow() {
  return (
    <div className="flex h-[1080px] w-[1920px] flex-col bg-[#c9d4e6] text-[12px]">
      <div className="flex h-[22px] shrink-0 items-start border-b border-[#5a7a70] bg-[linear-gradient(to_right,#d3efc9_0,#b3dcab_300px,#bde0b2_676px,#3e7f92_686px,#2f7093_980px,#2d6c90_1232px,#b5dcae_1246px,#b9dfb3_1920px)]">
        <div className="flex h-[21px] items-center">
          <svg width="16" height="16" viewBox="0 0 34 32"><path d="M2 22C0 12 8 5 18 5 28 6 31 14 28 21 24 28 20 23 16 27 12 31 4 29 2 22Z" fill="#cbe6f5" stroke="#3a9ac8" strokeWidth="3" /><circle cx="9" cy="17" r="3" fill="#e04848" /><circle cx="17" cy="12" r="3" fill="#5cb85c" /><path d="M30 3 24 29" stroke="#f08a20" strokeWidth="5" /></svg>
          <div className="ml-[7px] h-3 w-px bg-[#7d9a7a]" />
          <svg width="14" height="14" className="ml-[10px]"><path d="M.5.5h13v13H.5z" fill="#8a5ac8" stroke="#5a3a98" /><path d="M3 1h8v5H3z" fill="#fff" /><path d="M4 8h6v6H4z" fill="#d8d0ea" /></svg>
          <svg width="14" height="14" className="ml-[8px]" fill="none" stroke="#2a9ae0" strokeWidth="3"><path d="M3 5h4q5 0 4 4-1 3-5 4" /><path d="M5 0 1 5l5 4z" fill="#2a9ae0" stroke="none" /></svg>
          <svg width="14" height="14" className="ml-[8px] -scale-x-100" fill="none" stroke="#a3b8c0" strokeWidth="3"><path d="M3 5h4q5 0 4 4-1 3-5 4" /><path d="M5 0 1 5l5 4z" fill="#a3b8c0" stroke="none" /></svg>
          <svg width="13" height="16" className="ml-[9px]"><path d="M.5.5h9l3 3v12H.5z" fill="#fff" stroke="#8a8f98" /></svg>
          <svg width="8" height="8" className="ml-[9px]"><path d="M0 0h7v1.500H0zM0 3.500h7l-3.500 4z" fill="#222" /></svg>
          <div className="ml-[9px] h-3 w-px bg-[#7d9a7a]" />
          <Fit w={114} className="ml-[6px] text-[12px] text-black">kibana_02.png - Paint</Fit>
        </div>
        <div className="ml-auto mr-1"><WindowButtons plain /></div>
      </div>
      <div className="flex h-[24px] shrink-0 items-end bg-[#dfe9f5] text-[#1e395b]">
        <div className="mb-px flex h-[22px] w-[56px] items-center justify-center gap-[6px] rounded-t-[2px] bg-linear-to-b from-[#3a78c8] to-[#1c4a96]">
          <svg width="14" height="12" fill="#fff"><path d="M0 0h14v12H0z" /><path d="M5 1v10M7 3h5M7 6h5M7 9h5" stroke="#2a5aa8" /></svg>
          <svg width="8" height="5"><path d="M0 0h8L4 5z" fill="#fff" /></svg>
        </div>
        <div className="ml-[2.500px] flex h-[23px] w-[59px] items-center justify-center rounded-t-[3px] border border-b-0 border-[#b3c4db] bg-[#f9fcff]"><Fit w={36}>Accueil</Fit></div>
        <div className="ml-[16px] flex h-[23px] items-center"><Fit w={49}>Affichage</Fit></div>
        <div className="mb-1 ml-auto mr-[4px] flex h-[14px] w-[14px] items-center justify-center rounded-full border border-[#9ab8e8] bg-[#2a62c8] text-[10px] font-bold text-white">?</div>
      </div>
      <Ribbon />
      <div className="flex h-[898px] shrink-0">
        <div className="flex w-[1903px] flex-col overflow-hidden pl-[5px] pt-[5px]">
          <div className="h-[893px] w-[1898px] overflow-hidden">
            <ChromeHeader />
            <div className="grid h-[803px] w-[1920px] overflow-hidden">
              <div className="flex h-[950px] [grid-area:1/1]"><Sidebar /><RightDashboard /></div>
              <div className="ml-[24px] h-[2px] bg-[repeating-linear-gradient(to_right,#f09cc0_0,#f09cc0_200px,#e8488b_200px,#e8488b_400px)] [grid-area:1/1]" />
            </div>
          </div>
        </div>
        <div className="flex w-[17px] flex-col items-center border-l border-white bg-[#efefef]">
          <div className="flex h-[19px] items-center"><svg width="7" height="5"><path d="M0 5h7L3.500 0z" fill="#333" /></svg></div>
          <div className="flex h-[707px] w-[15px] items-center justify-center rounded-[2px] border border-[#979797] bg-linear-to-r from-[#f4f4f4] to-[#cfcfcf]"><div className="h-[8px] w-[7px] border-y border-[#666] py-[2px]"><div className="h-[2px] bg-[#777]" /></div></div>
          <div className="mb-[5px] mt-auto"><svg width="7" height="5"><path d="M0 0h7L3.500 5z" fill="#333" /></svg></div>
        </div>
      </div>
      <div className="flex h-[17px] shrink-0 items-center border-b-2 border-[#8f8f8f] bg-[#ececec] pl-[6px]">
        <svg width="5" height="7"><path d="M4 0v7L0 3.500z" fill="#333" /></svg>
        <div className="ml-[7px] flex h-[15px] w-[922px] items-center justify-center rounded-[2px] border border-[#979797] bg-linear-to-b from-[#f4f4f4] to-[#c8c8c8]"><div className="h-[7px] w-[8px] border-x border-[#666] px-[2px]"><div className="h-full bg-[#777]/60" /></div></div>
        <svg width="5" height="7" className="ml-auto mr-[23px]"><path d="M0 0v7l4-3.500z" fill="#333" /></svg>
      </div>
      <div className="flex h-[27px] shrink-0 items-center border-b-2 border-white bg-[#f0eeed] text-[#222]">
        <div className="flex h-full w-[156px] items-center border-r border-[#d5d5d5] pl-[3px]"><svg width="12" height="12" stroke="#1e395b" fill="none"><path d="M6 0v12M0 6h12M4 2l2-2 2 2M4 10l2 2 2-2M2 4 0 6l2 2M10 4l2 2-2 2" /></svg></div>
        <div className="flex h-full w-[156px] items-center border-r border-[#d5d5d5] pl-[5px]"><svg width="14" height="13" stroke="#1e395b" fill="none"><path d="M2 1v10M0 2l2-2 2 2M4 12.500h9M11 10.500l2 2-2 2" /><path d="M5 1h7v8H5z" strokeDasharray="2 1" /></svg></div>
        <div className="flex h-full w-[156px] items-center border-r border-[#d5d5d5] pl-[5px]"><svg width="14" height="13" stroke="#1e395b" fill="none"><path d="M2 1v10M0 2l2-2 2 2M4 12.500h9M11 10.500l2 2-2 2M5 1h7v8H5z" /></svg><Fit w={75} className="ml-[5px]">3840 × 1080px</Fit></div>
        <div className="flex h-full w-[156px] items-center border-r border-[#d5d5d5] pl-[7px]"><svg width="11" height="12" stroke="#1e395b" fill="none"><path d="M.5.500h10v11H.500zM3 1v4h5V1M3 11V8h5v3" /></svg><Fit w={81} className="ml-[6px]">Taille : 346,9 Ko</Fit></div>
        <div className="ml-auto flex h-full w-[199px] items-center border-l border-[#d5d5d5] pl-[17px]">
          <Fit w={32}>100 %</Fit>
          <svg width="17" height="17" className="ml-[7px]" fill="#f4f4f4" stroke="#666"><circle cx="8.500" cy="8.500" r="7.500" /><path d="M5 8.500h7" strokeWidth="2" /></svg>
          <svg width="86" height="17" className="ml-[9px]"><path d="M0 6.500h84v3H0z" fill="#ddd" stroke="#aaa" /><path d="M39 1h8v11l-4 4-4-4z" fill="#eee" stroke="#777" /></svg>
          <svg width="17" height="17" className="ml-[10px]" fill="#f4f4f4" stroke="#666"><circle cx="8.500" cy="8.500" r="7.500" /><path d="M5 8.500h7M8.500 5v7" strokeWidth="2" /></svg>
        </div>
      </div>
    </div>
  );
}

export default function App() {
  return (
    <div className="flex h-[1080px] w-[3840px] overflow-hidden font-['Open_Sans','Noto_Sans',sans-serif]">
      <div className="flex w-[1920px] flex-col">
        <ChromeHeader />
        <div className="relative flex h-[950px] shrink-0">
          <Sidebar />
          <LeftDashboard />
          <div className="flex w-[17px] flex-col items-center bg-[#f1f1f1]">
            <svg width="17" height="17"><path d="M5 11h7l-3.500-4z" fill="#505050" /></svg>
            <div className="mt-[467px] h-[274px] w-[13px] bg-[#c1c1c1]" />
            <svg width="17" height="17" className="mt-auto"><path d="M5 6h7l-3.500 4z" fill="#505050" /></svg>
          </div>
          <Tooltip />
        </div>
        <Taskbar />
      </div>
      <PaintWindow />
    </div>
  );
}
